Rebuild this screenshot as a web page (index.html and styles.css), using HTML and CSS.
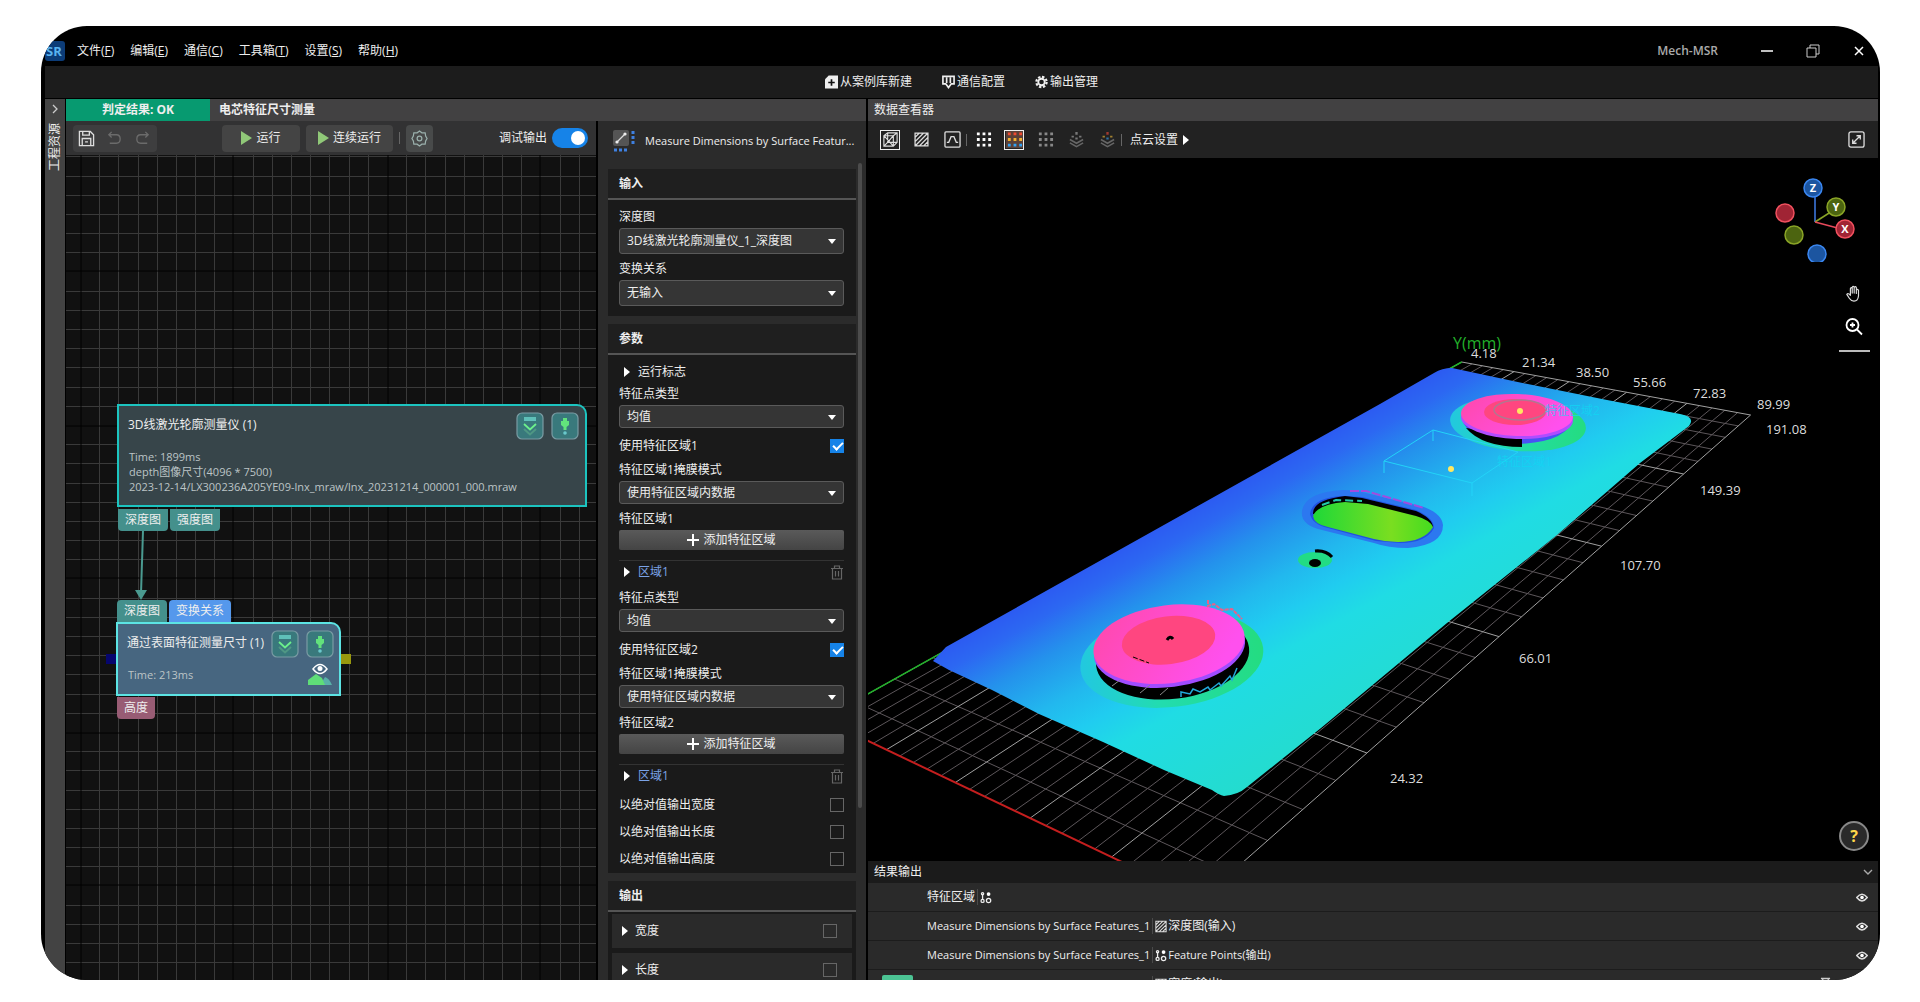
FILE: index.html
```
<!DOCTYPE html>
<html lang="zh-CN">
<head>
    <meta charset="UTF-8">
    <meta name="viewport" content="width=device-width, initial-scale=1.0">
    <title>Mech-MSR</title>
    <link rel="stylesheet" href="styles.css">
</head>
<body>
    <!-- shared icons -->
    <svg class="sprite" aria-hidden="true">
        <symbol id="i-eye" viewBox="0 0 16 12">
            <path d="M1 6Q8-3 15 6Q8 15 1 6Z" fill="none" stroke="#ddd" stroke-width="2"/>
            <circle cx="8" cy="6" r="2.4" fill="#fff"/>
        </symbol>
        <symbol id="i-trash" viewBox="0 0 14 15">
            <path d="M1 3.500H13M4.500 3V1H9.500V3M2.500 3.500V14H11.500V3.500M5.500 6V11.500M8.500 6V11.500" fill="none" stroke="#666" stroke-width="1.200"/>
        </symbol>
        <symbol id="i-points" viewBox="0 0 14 14">
            <g fill="none" stroke="#eee" stroke-width="1.500">
                <circle cx="3" cy="2.500" r="1.300"/>
                <circle cx="3" cy="11" r="1.800"/>
                <circle cx="10" cy="10.500" r="2.500"/>
                <path d="M3 4V9"/>
            </g>
            <circle cx="10" cy="3" r="2.200" fill="#fff"/>
        </symbol>
        <symbol id="i-hatch" viewBox="0 0 14 14">
            <path d="M1 1H13V13H1ZM1 5L5 1M1 9L9 1M1 13L13 1M5 13L13 5M9 13L13 9" fill="none" stroke="#ddd" stroke-width="1.200"/>
        </symbol>
        <symbol id="i-expand" viewBox="0 0 28 28">
            <rect x="1" y="1" width="26" height="26" rx="5" fill="#39797c" stroke="#7a9ca4" stroke-width="1.200"/>
            <rect x="8" y="5" width="12" height="4" fill="#5fc0b8"/>
            <path d="M8 17L14 22.500L20 17" fill="none" stroke="#4f9784" stroke-width="2"/>
            <path d="M8 12L14 17.500L20 12" fill="none" stroke="#6cf08c" stroke-width="1.800"/>
        </symbol>
        <symbol id="i-run" viewBox="0 0 28 28">
            <rect x="1" y="1" width="26" height="26" rx="5" fill="#39797c" stroke="#7a9ca4" stroke-width="1.200"/>
            <path d="M12 6H16V9H18V13L15.500 15V18H12.500V15L10 13V9H12Z" fill="#62e37c"/>
            <circle cx="14" cy="21" r="1.800" fill="#69c8cc"/>
        </symbol>
        <symbol id="i-layers" viewBox="0 0 16 18">
            <path d="M1 9L8 13L15 9M1 12.500L8 16.500L15 12.500" fill="none" stroke="#666" stroke-width="1.600"/>
        </symbol>
    </svg>

    <div class="window">
        <header class="titlebar">
            <svg class="logo" viewBox="0 0 20 20"><rect width="20" height="20" rx="3" fill="#0c3c78"/><text x="1" y="15" class="logo-text">SR</text></svg>
            <nav class="menu">
                <a href="#">文件(<u>F</u>)</a>
                <a href="#">编辑(<u>E</u>)</a>
                <a href="#">通信(<u>C</u>)</a>
                <a href="#">工具箱(<u>T</u>)</a>
                <a href="#">设置(<u>S</u>)</a>
                <a href="#">帮助(<u>H</u>)</a>
            </nav>
            <span class="app-name">Mech-MSR</span>
            <div class="window-buttons">
                <button aria-label="最小化"><svg viewBox="0 0 14 14"><path d="M1 7H13" stroke="#fff" stroke-width="1.500"/></svg></button>
                <button aria-label="还原"><svg viewBox="0 0 14 14" fill="none" stroke="#ccc"><path d="M1 4H10V13H1ZM4 4V1H13V10H10"/></svg></button>
                <button aria-label="关闭"><svg viewBox="0 0 14 14"><path d="M3 3L11 11M11 3L3 11" stroke="#fff" stroke-width="1.500"/></svg></button>
            </div>
        </header>

        <div class="main-toolbar">
            <button><svg viewBox="0 0 14 14"><path d="M4 0H14V14H0V4Z" fill="#eee"/><path d="M7 4V11M3.500 7.500H10.500" stroke="#111" stroke-width="1.800"/></svg>从案例库新建</button>
            <button><svg viewBox="0 0 14 14"><path d="M1 1H13V9H10L7 13L4 9H1Z" fill="none" stroke="#eee" stroke-width="1.800"/><path d="M5 2V8M9 2V8" stroke="#eee" stroke-width="1.800"/></svg>通信配置</button>
            <button><svg viewBox="0 0 14 14"><circle cx="7" cy="7" r="5.500" fill="none" stroke="#eee" stroke-width="2.400" stroke-dasharray="2.600 1.700"/><circle cx="7" cy="7" r="3.500" fill="none" stroke="#eee" stroke-width="2"/></svg>输出管理</button>
        </div>

        <main class="workspace">
            <aside class="side">
                <svg viewBox="0 0 10 12"><path d="M3 2L7 6L3 10" fill="none" stroke="#ccc" stroke-width="1.300"/></svg>
                <span>工程资源</span>
            </aside>

            <section class="project">
                <div class="strip">
                    <span class="verdict">判定结果: OK</span>
                    <h1>电芯特征尺寸测量</h1>
                </div>
                <div class="project-body">
                    <div class="graph">
                        <div class="graph-toolbar">
                            <div class="group">
                                <button aria-label="保存"><svg viewBox="0 0 18 18" fill="none" stroke="#ddd" stroke-width="1.400"><path d="M1.500 1.500H13L16.500 5V16.500H1.500ZM5 1.500V5.500H12V1.500M4.500 16.500V9H13.500V16.500M7.500 12.500H10.500"/></svg></button>
                                <button aria-label="撤销"><svg viewBox="0 0 18 18" fill="none" stroke="#6b6b6b" stroke-width="1.400"><path d="M6 2L3 5L6 8M3 5H11Q15 5 15 9.500T11 14H4"/></svg></button>
                                <button aria-label="重做"><svg viewBox="0 0 18 18" fill="none" stroke="#6b6b6b" stroke-width="1.400"><path d="M12 2L15 5L12 8M15 5H7Q3 5 3 9.500T7 14H14"/></svg></button>
                            </div>
                            <button class="run"><i class="play"></i>运行</button>
                            <button class="run run-loop"><i class="play"></i>连续运行</button>
                            <i class="sep"></i>
                            <button class="gear" aria-label="设置"><svg viewBox="0 0 18 18" fill="none" stroke="#9ab0ac" stroke-width="1.300"><path d="M9 1L11.500 3H15L15.500 6.500L17 9L15.500 11.500L15 15H11.500L9 17L6.500 15H3L2.500 11.500L1 9L2.500 6.500L3 3H6.500Z"/><circle cx="9" cy="9" r="2.500"/></svg></button>
                            <label class="debug">调试输出<input type="checkbox" class="switch" checked></label>
                        </div>

                        <div class="canvas">
                            <svg class="grid">
                                <defs>
                                    <pattern id="grid" width="307" height="307" x="14" y="-37" patternUnits="userSpaceOnUse">
                                        <path id="gridMinor" stroke="#3a3a3a"/>
                                        <path stroke="#000" d="M0 1H307M0 153H307M1 0V307M153 0V307"/>
                                    </pattern>
                                </defs>
                                <rect width="100%" height="100%" fill="url(#grid)"/>
                                <path d="M77 376L75 438" stroke="#4a9a90" stroke-width="2"/>
                                <path d="M69 435H81L75 445Z" fill="#4a9a90"/>
                            </svg>

                            <div class="node node-camera">
                                <div class="node-head">
                                    <h2>3D线激光轮廓测量仪 (1)</h2>
                                    <svg><use href="#i-expand"/></svg>
                                    <svg><use href="#i-run"/></svg>
                                </div>
                                <p>Time: 1899ms</p>
                                <p>depth图像尺寸(4096 * 7500)</p>
                                <p>2023-12-14/LX300236A205YE09-lnx_mraw/lnx_20231214_000001_000.mraw</p>
                            </div>
                            <div class="ports ports-camera-out">
                                <span>深度图</span>
                                <span>强度图</span>
                            </div>

                            <div class="ports ports-measure-in">
                                <span>深度图</span>
                                <span class="port-blue">变换关系</span>
                            </div>
                            <div class="node node-measure">
                                <div class="node-head">
                                    <h2>通过表面特征测量尺寸 (1)</h2>
                                    <svg><use href="#i-expand"/></svg>
                                    <svg><use href="#i-run"/></svg>
                                </div>
                                <div class="node-foot">
                                    <p>Time: 213ms</p>
                                    <svg viewBox="0 0 26 22">
                                        <path d="M6 6Q13-3 20 6Q13 15 6 6Z" fill="none" stroke="#fff" stroke-width="1.500"/>
                                        <circle cx="13" cy="5.500" r="2.500" fill="#fff"/>
                                        <path d="M13 22L18 14Q22 15 25 22Z" fill="#58b0a8"/>
                                        <path d="M1 22V17L9 11L15 15L18 22Z" fill="#5fdd78"/>
                                    </svg>
                                </div>
                            </div>
                            <i class="pin pin-in"></i>
                            <i class="pin pin-out"></i>
                            <div class="ports ports-measure-out">
                                <span class="port-rose">高度</span>
                            </div>
                        </div>
                    </div>

                    <div class="params">
                        <div class="params-title">
                            <svg viewBox="0 0 22 22">
                                <rect width="16" height="16" rx="2" fill="#555"/>
                                <path d="M4 12L12 4" stroke="#ddd" stroke-width="1.300"/>
                                <circle cx="4" cy="12" r="1.600" fill="#eee"/><circle cx="12" cy="4" r="1.600" fill="#eee"/>
                                <path d="M1 20H15M20 1V15" stroke="#3f80e0" stroke-width="3" stroke-dasharray="3 2"/>
                            </svg>
                            <h2>Measure Dimensions by Surface Featur...</h2>
                        </div>
                        <div class="params-scroll">
                            <form class="sections">
                                <section>
                                    <h3>输入</h3>
                                    <div class="fields inputs">
                                        <label for="depth">深度图</label>
                                        <div class="select"><select id="depth"><option>3D线激光轮廓测量仪_1_深度图</option></select></div>
                                        <label for="transform">变换关系</label>
                                        <div class="select"><select id="transform"><option>无输入</option></select></div>
                                    </div>
                                </section>

                                <section>
                                    <h3>参数</h3>
                                    <div class="fields">
                                        <div class="fold"><i class="tri"></i>运行标志</div>
                                        <label for="type1">特征点类型</label>
                                        <div class="select"><select id="type1"><option>均值</option></select></div>
                                        <label class="check">使用特征区域1<input type="checkbox" checked></label>
                                        <label for="mask1">特征区域1掩膜模式</label>
                                        <div class="select"><select id="mask1"><option>使用特征区域内数据</option></select></div>
                                        <div class="caption">特征区域1</div>
                                        <button type="button" class="add"><i class="plus"></i>添加特征区域</button>
                                        <div class="fold region"><i class="tri"></i><span>区域1</span><svg><use href="#i-trash"/></svg></div>
                                        <label for="type2">特征点类型</label>
                                        <div class="select"><select id="type2"><option>均值</option></select></div>
                                        <label class="check">使用特征区域2<input type="checkbox" checked></label>
                                        <label for="mask2">特征区域1掩膜模式</label>
                                        <div class="select"><select id="mask2"><option>使用特征区域内数据</option></select></div>
                                        <div class="caption">特征区域2</div>
                                        <button type="button" class="add"><i class="plus"></i>添加特征区域</button>
                                        <div class="fold region"><i class="tri"></i><span>区域1</span><svg><use href="#i-trash"/></svg></div>
                                        <label class="check">以绝对值输出宽度<input type="checkbox"></label>
                                        <label class="check">以绝对值输出长度<input type="checkbox"></label>
                                        <label class="check">以绝对值输出高度<input type="checkbox"></label>
                                    </div>
                                </section>

                                <section>
                                    <h3>输出</h3>
                                    <div class="outputs">
                                        <label><i class="tri"></i>宽度<input type="checkbox"></label>
                                        <label><i class="tri"></i>长度<input type="checkbox"></label>
                                    </div>
                                </section>
                            </form>
                            <div class="track"><i></i></div>
                        </div>
                    </div>
                </div>
            </section>

            <section class="viewer">
                <div class="strip">数据查看器</div>
                <div class="viewer-toolbar">
                    <button class="on" aria-label="3D"><svg viewBox="0 0 18 18" fill="none" stroke="#ddd" stroke-width="1.200"><path d="M2 5L6 2H16V12L12 16H2ZM2 5H12V16M12 5L16 2M6 2V12H16M6 12L2 16M2 5L12 16M12 5L6 12"/></svg></button>
                    <button aria-label="深度"><svg class="small"><use href="#i-hatch"/></svg></button>
                    <button aria-label="轮廓"><svg viewBox="0 0 18 18" fill="none" stroke="#ddd" stroke-width="1.400"><rect x="1" y="1" width="16" height="16" rx="1"/><path d="M3 12H5L7.500 6H10.500L13 12H15"/></svg></button>
                    <i class="sep"></i>
                    <button aria-label="点云"><svg viewBox="0 0 18 18"><path d="M2 3H17M2 9H17M2 15H17" class="dots" stroke="#fff"/></svg></button>
                    <button class="on" aria-label="高度渲染"><svg viewBox="0 0 18 18"><rect width="18" height="18" fill="#5a4038"/><path d="M2 3H17" class="dots" stroke="#f04a30"/><path d="M2 9H17" class="dots" stroke="#f0b030"/><path d="M2 15H17" class="dots" stroke="#30a0f0"/></svg></button>
                    <button aria-label="灰度点云"><svg viewBox="0 0 18 18"><path d="M2 3H17M2 9H17M2 15H17" class="dots" stroke="#888"/></svg></button>
                    <button aria-label="图层"><svg viewBox="0 0 16 18"><use href="#i-layers"/><path d="M8 1V4M4 5V7M12 5V7M8 7V9" stroke="#777" stroke-width="2.500"/></svg></button>
                    <button aria-label="彩色图层"><svg viewBox="0 0 16 18"><use href="#i-layers"/><path d="M8 1V4" stroke="#a03a30" stroke-width="2.500"/><path d="M4 5V7M12 5V7" stroke="#a08030" stroke-width="2.500"/><path d="M8 7V9" stroke="#3070a0" stroke-width="2.500"/></svg></button>
                    <i class="sep"></i>
                    <button class="cloud">点云设置<i class="tri"></i></button>
                    <button class="full" aria-label="全屏"><svg viewBox="0 0 18 18" fill="none" stroke="#ddd" stroke-width="1.400"><rect x="1" y="1" width="16" height="16" rx="2"/><path d="M5 13L13 5M9 5H13V9M5 9V13H9"/></svg></button>
                </div>

                <div class="scene">
                    <svg class="cloud-view" viewBox="868 158 1010 703" preserveAspectRatio="xMidYMid slice">
                        <defs>
                            <linearGradient id="plate" gradientUnits="userSpaceOnUse" x1="1190" y1="512" x2="1327" y2="756">
                                <stop offset="0" stop-color="#2c5cf2"/>
                                <stop offset=".07" stop-color="#2c68f2"/>
                                <stop offset=".2" stop-color="#2492ec"/>
                                <stop offset=".36" stop-color="#22b8ee"/>
                                <stop offset=".48" stop-color="#20ccf0"/>
                                <stop offset=".6" stop-color="#20dce4"/>
                                <stop offset="1" stop-color="#24dccc"/>
                            </linearGradient>
                            <linearGradient id="disc" x1="0" y1="0" x2="1" y2=".4">
                                <stop offset="0" stop-color="#ff48a8"/>
                                <stop offset="1" stop-color="#ff50ee"/>
                            </linearGradient>
                            <linearGradient id="ring" x1="0" y1="0" x2="1" y2="0">
                                <stop offset="0" stop-color="#22c8e0"/>
                                <stop offset=".4" stop-color="#22dcb0"/>
                                <stop offset="1" stop-color="#24dc80"/>
                            </linearGradient>
                            <linearGradient id="slot" x1="0" y1="0" x2="1" y2="0">
                                <stop offset="0" stop-color="#1ed838"/>
                                <stop offset=".65" stop-color="#7ade20"/>
                                <stop offset="1" stop-color="#44dc20"/>
                            </linearGradient>
                        </defs>

                        <g fill="none">
                            <path id="floorMinor" stroke="#5c565a"/>
                            <path id="floorMajor" stroke="#a0a0a0"/>
                            <path id="axisX" stroke="#c41e1e" stroke-width="2"/>
                            <path id="axisY" stroke="#22b02a" stroke-width="1.500"/>
                        </g>

                        <!-- battery cover plate -->
                        <path fill="url(#plate)" d="M933 661L946 647L1380 404L1434 373Q1442 368 1452 368L1513 381L1607 400L1680 414Q1696 417 1689 426L1640 463L1557 535L1447 623L1321 728L1247 787Q1238 795 1224 796Q1219 795 1212 790L1164 770L1103 742L1039 714L992 690L949 670Z"/>

                        <!-- lower terminal -->
                        <g transform="rotate(-7 1171 652)">
                            <ellipse cx="1171" cy="659" rx="92" ry="48" fill="url(#ring)"/>
                            <ellipse cx="1172" cy="657" rx="77" ry="42" fill="#000"/>
                            <ellipse cx="1170" cy="648" rx="76" ry="39" fill="#a04cff"/>
                            <ellipse cx="1170" cy="644" rx="76" ry="39" fill="url(#disc)"/>
                            <ellipse cx="1170" cy="640" rx="47" ry="24" fill="#ff4680"/>
                        </g>
                        <path d="M1167 640Q1170 635 1173 639" fill="none" stroke="#000" stroke-width="3"/>
                        <path d="M1133 657L1149 663" stroke="#000" stroke-dasharray="5 2"/>
                        <path d="M1208 600V606L1214 604L1222 610L1232 609L1242 619" fill="none" stroke="#e8608c" stroke-width="2" stroke-dasharray="4 1"/>
                        <path d="M1181 697V692L1190 694L1193 689L1200 692L1208 687L1210 690L1219 683L1221 686L1230 676L1232 680L1237 668" fill="none" stroke="#22a8d8" stroke-width="1.500"/>
                        <path d="M1112 686L1120 680M1140 693L1150 685M1160 695L1168 688" stroke="#888"/>

                        <!-- upper terminal -->
                        <ellipse cx="1518" cy="424" rx="68" ry="27" fill="url(#ring)" transform="rotate(4 1518 424)"/>
                        <path d="M1462 418Q1465 440 1518 444Q1568 442 1573 418Z" fill="#4a50f4"/>
                        <path d="M1466 428L1522 436V447Q1482 447 1466 428Z" fill="#000"/>
                        <ellipse cx="1517" cy="419" rx="56" ry="20" fill="#b04cff" transform="rotate(2 1517 419)"/>
                        <ellipse cx="1517" cy="415" rx="56" ry="21" fill="url(#disc)" transform="rotate(2 1517 415)"/>
                        <ellipse cx="1515" cy="412" rx="31" ry="13" fill="#ff4680"/>
                        <ellipse cx="1520" cy="410" rx="26" ry="10" fill="none" stroke="#b07890" stroke-width="1.500"/>

                        <!-- vent slot -->
                        <path d="M1302 511Q1305 492 1343 490Q1356 490 1366 493L1424 507Q1442 514 1443 525Q1443 545 1408 548Q1388 548 1374 543L1322 530Q1300 525 1302 511Z" fill="#2c78f0"/>
                        <path d="M1310 514Q1312 498 1342 496L1362 497L1416 510Q1434 518 1434 528Q1426 543 1400 543L1376 541L1328 528Q1312 524 1310 514Z" fill="#2250e0"/>
                        <path d="M1313 514Q1312 500 1345 496L1362 498L1416 511Q1432 518 1433 527L1400 520L1350 510Z" fill="#000"/>
                        <path d="M1313 516Q1318 504 1345 502L1368 504L1416 516Q1430 520 1433 527Q1424 542 1398 542Q1386 542 1374 539L1328 527Q1314 524 1313 516Z" fill="url(#slot)"/>
                        <path d="M1350 491H1366L1390 498L1424 508" fill="none" stroke="#a04ce0" stroke-width="2" stroke-dasharray="9 2"/>
                        <path d="M1322 505L1336 500L1362 501" fill="none" stroke="#22c8a8" stroke-width="2" stroke-dasharray="8 4"/>

                        <!-- filling hole -->
                        <ellipse cx="1315" cy="560" rx="17" ry="8" fill="#22dc84"/>
                        <ellipse cx="1315" cy="563" rx="6" ry="4" fill="#000"/>
                        <path d="M1315 551Q1326 550 1332 557" fill="none" stroke="#000" stroke-width="3"/>

                        <!-- measuring box -->
                        <path d="M1384 473V461L1433 430L1518 452L1472 483L1384 461M1433 430V441M1472 483V496" fill="none" stroke="#22d4f8"/>
                        <g class="tag">
                            <text x="1545" y="415">特征区域2</text>
                            <text x="1497" y="466">特征区域1</text>
                        </g>
                        <circle cx="1520" cy="411" r="3" fill="#ffe860"/>
                        <circle cx="1451" cy="469" r="3" fill="#ffe860"/>

                        <text x="1453" y="349" class="axis-name">Y(mm)</text>
                        <g class="ticks">
                            <text x="1471" y="358">4.18</text>
                            <text x="1522" y="367">21.34</text>
                            <text x="1576" y="377">38.50</text>
                            <text x="1633" y="387">55.66</text>
                            <text x="1693" y="398">72.83</text>
                            <text x="1757" y="409">89.99</text>
                            <text x="1766" y="434">191.08</text>
                            <text x="1700" y="495">149.39</text>
                            <text x="1620" y="570">107.70</text>
                            <text x="1519" y="663">66.01</text>
                            <text x="1390" y="783">24.32</text>
                        </g>
                    </svg>

                    <div class="tools">
                        <svg class="gizmo" viewBox="0 0 84 92">
                            <g fill="none" stroke-width="1.500">
                                <path d="M42 52V18" stroke="#3f7de8"/>
                                <path d="M42 52L64 38" stroke="#8aa426"/>
                                <path d="M42 52L72 60" stroke="#e84a5c"/>
                            </g>
                            <g stroke-width="1.500">
                                <circle cx="40" cy="18" r="9" fill="#1c55a0" stroke="#3a86f0"/>
                                <circle cx="63" cy="37" r="9" fill="#4c6410" stroke="#8aa426"/>
                                <circle cx="72" cy="59" r="9" fill="#a02434" stroke="#f0505e"/>
                                <circle cx="12" cy="43" r="9" fill="#a02434" stroke="#f0505e"/>
                                <circle cx="21" cy="65" r="9" fill="#4c6410" stroke="#8aa426"/>
                                <circle cx="44" cy="84" r="9" fill="#1c55a0" stroke="#3a86f0"/>
                            </g>
                            <text x="40" y="22">Z</text>
                            <text x="63" y="41">Y</text>
                            <text x="72" y="63">X</text>
                        </svg>
                        <button aria-label="平移"><svg viewBox="0 0 20 20" fill="none" stroke="#ddd" stroke-width="1.300" stroke-linejoin="round"><path d="M6 12V4.500Q7 2.500 8 4.500V9.500V3Q9 1 10.200 3V9.500V3.300Q11.500 1.500 12.600 3.500V10V6Q14 4.500 15 6.500V12.500Q14.500 18.500 10 18.500Q7 18.500 5 15.500L2 11Q3.500 9 6 12Z"/></svg></button>
                        <button aria-label="放大"><svg viewBox="0 0 18 18" fill="none" stroke="#fff" stroke-width="1.800"><circle cx="7.500" cy="7.500" r="6"/><path d="M12 12L17 17M7.500 5V10M5 7.500H10"/></svg></button>
                        <hr>
                    </div>
                    <button class="help">?</button>
                </div>

                <div class="results">
                    <div class="results-title">结果输出<svg viewBox="0 0 12 12"><path d="M2 4L6 8L10 4" fill="none" stroke="#aaa" stroke-width="1.400"/></svg></div>
                    <ul>
                        <li><span class="cjk">特征区域</span><i class="sep"></i><svg class="kind"><use href="#i-points"/></svg><svg class="eye"><use href="#i-eye"/></svg></li>
                        <li><span>Measure Dimensions by Surface Features_1</span><i class="sep"></i><svg class="kind"><use href="#i-hatch"/></svg><span class="cjk">深度图(输入)</span><svg class="eye"><use href="#i-eye"/></svg></li>
                        <li><span>Measure Dimensions by Surface Features_1</span><i class="sep"></i><svg class="kind"><use href="#i-points"/></svg><span>Feature Points(输出)</span><svg class="eye"><use href="#i-eye"/></svg></li>
                        <li><b class="ok">OK</b><span>Measure Dimensions by Surface Features_1</span><i class="sep"></i><svg class="kind"><use href="#i-hatch"/></svg><span class="cjk">宽度(输出)</span><span class="value">3.181</span><svg class="pinned" viewBox="0 0 12 14"><path d="M1 1H11M3 1V7L1 9H11L9 7V1M6 9V14" fill="none" stroke="#ccc" stroke-width="1.500"/></svg></li>
                    </ul>
                </div>
            </section>
        </main>
    </div>

    <script>
        // workflow canvas: 16 cells per pattern tile, every 8th line is drawn black
        let cells = '';
        for (let i = 1; i < 16; i++) {
            if (i === 8) continue;
            const p = Math.round(i * 307 / 16) + 0.5;
            cells += `M${p} 0V307M0 ${p}H307`;
        }
        document.getElementById('gridMinor').setAttribute('d', cells);

        // floor grid of the 3D view, u goes across the plate and v along it
        function project(u, v) {
            const w = 1 - 0.0227 * u - 0.08096 * v;
            const x = (1461.7 + 18.04 * u - 195.7 * v) / w;
            const y = (362 + 1.18 * u + 13.95 * v) / w;
            return x.toFixed(1) + ' ' + y.toFixed(1);
        }
        function line(u1, v1, u2, v2) {
            return 'M' + project(u1, v1) + 'L' + project(u2, v2);
        }
        const END = 4.95;
        let minor = '';
        let major = '';
        for (let i = 0; i <= 25; i++) {
            const n = i / 5;
            if (i % 5) {
                minor += line(n, 0, n, END) + line(0, n, 5, n);
            } else {
                major += line(n, 0, n, END);
                if (n < 5) major += line(0, n, 5, n);
            }
        }
        document.getElementById('floorMinor').setAttribute('d', minor);
        document.getElementById('floorMajor').setAttribute('d', major);
        document.getElementById('axisX').setAttribute('d', line(0, END, 5, END));
        document.getElementById('axisY').setAttribute('d', line(0, 0, 0, END));
    </script>
</body>
</html>
```
FILE: styles.css
```
*{
    margin: 0;
    padding: 0;
    box-sizing: border-box;
}
body{
    background-color: white;
    color: #eee;
    height: 100vh;
    padding: 26px 40px 22px 41px;
    font-family: "Open Sans", "Noto Sans CJK SC", sans-serif;
    font-size: 12px;
    line-height: 16px;
}
button, select, input {
    font: inherit;
    color: inherit;
    background: none;
    border: none;
}
h1, h2, h3 {
    font-size: 12px;
}
i {
    display: block;
    flex: none;
}
svg {
    display: block;
    flex: none;
}
.sprite {
    position: absolute;
    width: 0;
    height: 0;
}
.window {
    height: 100%;
    display: flex;
    flex-direction: column;
    background-color: black;
    border-radius: 46px;
    overflow: hidden;
    padding: 0 2px 0 4px;
    white-space: nowrap;
}

/* title bar */
.titlebar {
    height: 40px;
    flex: none;
    display: flex;
    align-items: center;
    padding: 9px 12px 0 0;
}
.logo {
    width: 20px;
    height: 20px;
}
.logo-text {
    font-size: 13px;
    font-weight: bold;
    fill: #5ab4f0;
}
.menu {
    display: flex;
    gap: 16px;
    margin-left: 12px;
}
.menu a {
    color: #eee;
    text-decoration: none;
}
.app-name {
    margin-left: auto;
    color: #aaa;
    font-weight: 600;
}
.window-buttons {
    display: flex;
    gap: 32px;
    margin-left: 42px;
}
.window-buttons svg {
    width: 14px;
    height: 14px;
}
.main-toolbar {
    height: 32px;
    flex: none;
    display: flex;
    justify-content: center;
    align-items: center;
    gap: 30px;
    background-color: #1c1c1c;
}
.main-toolbar button {
    display: flex;
    align-items: center;
    gap: 2px;
}
.main-toolbar svg {
    width: 13px;
    height: 14px;
}

/* columns */
.workspace {
    flex: 1;
    min-height: 0;
    margin-top: 1px;
    display: flex;
}
.side {
    width: 20px;
    flex: none;
    margin-right: 1px;
    padding-top: 4px;
    background-color: #434343;
    display: flex;
    flex-direction: column;
    align-items: center;
    gap: 8px;
}
.side svg {
    width: 10px;
    height: 12px;
}
.side span {
    writing-mode: vertical-rl;
    text-orientation: sideways;
    transform: rotate(180deg);
}
.project {
    flex: 800 1 0;
    min-width: 0;
    display: flex;
    flex-direction: column;
    margin-right: 2px;
}
.strip {
    height: 22px;
    flex: none;
    background-color: #424142;
    display: flex;
    align-items: center;
}
.verdict {
    width: 144px;
    line-height: 22px;
    background-color: #079a70;
    text-align: center;
    font-weight: bold;
}
.strip h1 {
    margin-left: 9px;
}
.project-body {
    flex: 1;
    min-height: 0;
    display: flex;
}
.graph {
    flex: 1;
    min-width: 0;
    margin-right: 2px;
    display: flex;
    flex-direction: column;
}
.graph-toolbar {
    height: 34px;
    flex: none;
    background-color: #323233;
    display: flex;
    align-items: center;
    padding: 0 8px 0 7px;
}
.group {
    display: flex;
    background-color: #3e3e3f;
    border-radius: 4px;
    margin-right: 65px;
}
.group button {
    width: 28px;
    height: 27px;
    padding: 5px;
}
.run {
    width: 78px;
    height: 27px;
    background-color: #444444;
    border-radius: 4px;
    display: flex;
    align-items: center;
    justify-content: center;
    gap: 4px;
}
.run-loop {
    width: 87px;
    margin-left: 6px;
}
.play {
    border-left: 11px solid #90c878;
    border-top: 7px solid transparent;
    border-bottom: 7px solid transparent;
}
.sep {
    width: 1px;
    height: 12px;
    background-color: #666;
}
.run-loop + .sep {
    margin: 0 6px;
}
.gear {
    width: 27px;
    height: 27px;
    padding: 5px;
    background-color: #484a4a;
    border-radius: 4px;
}
.group svg, .gear svg {
    width: 17px;
    height: 17px;
}
.debug {
    margin-left: auto;
    display: flex;
    align-items: center;
    gap: 5px;
}
.switch {
    appearance: none;
    width: 36px;
    height: 20px;
    padding: 3px;
    border-radius: 10px;
    background-color: #1683e8;
    display: flex;
    justify-content: flex-end;
}
.switch::before {
    content: "";
    width: 14px;
    height: 14px;
    border-radius: 50%;
    background-color: white;
}

/* workflow canvas */
.canvas {
    flex: 1;
    min-height: 0;
    position: relative;
    overflow: hidden;
    background-color: #111;
}
.grid {
    width: 100%;
    height: 100%;
}
.node {
    position: absolute;
    border: 2px solid #1cc4c0;
    border-radius: 0 10px 0 0;
    padding: 6px;
    font-size: 11px;
    line-height: 15px;
    color: #bcc4c6;
}
.node-head {
    display: flex;
    align-items: center;
    gap: 7px;
}
.node-head h2 {
    flex: 1;
    padding: 0 0 3px 3px;
    font-weight: normal;
    color: #eee;
}
.node-head svg {
    width: 28px;
    height: 28px;
}
.node p {
    padding-left: 4px;
}
.node-camera {
    left: 51px;
    top: 249px;
    width: 470px;
    height: 103px;
    background-color: #37454a;
}
.node-camera .node-head {
    margin-bottom: 9px;
}
.node-measure {
    left: 50px;
    top: 467px;
    width: 225px;
    height: 74px;
    border-color: #5ce4e4;
    background-color: #476680;
}
.node-foot {
    display: flex;
    justify-content: space-between;
    align-items: center;
    margin-top: 5px;
}
.node-foot svg {
    width: 26px;
    height: 22px;
}
.ports {
    position: absolute;
    display: flex;
    gap: 2px;
}
.ports span {
    padding: 0 7px;
    line-height: 22px;
    background-color: #44908c;
    border-radius: 0 0 4px 4px;
}
.ports .port-blue {
    background-color: #5598ec;
}
.ports .port-rose {
    background-color: #985c74;
}
.ports-camera-out {
    left: 52px;
    top: 354px;
}
.ports-measure-in {
    left: 51px;
    top: 445px;
}
.ports-measure-in span {
    border-radius: 4px 4px 0 0;
}
.ports-measure-out {
    left: 51px;
    top: 542px;
}
.pin {
    position: absolute;
    top: 499px;
    width: 10px;
    height: 10px;
}
.pin-in {
    left: 40px;
    background-color: #06066e;
}
.pin-out {
    left: 275px;
    background-color: #98980e;
}

/* parameters */
.params {
    width: 268px;
    flex: none;
    background-color: #2b2b2b;
    display: flex;
    flex-direction: column;
}
.params-title {
    height: 40px;
    flex: none;
    display: flex;
    align-items: center;
    gap: 10px;
    padding-left: 15px;
}
.params-title svg {
    width: 22px;
    height: 22px;
}
.params-title h2 {
    font-size: 11px;
    font-weight: normal;
}
.params-scroll {
    flex: 1;
    min-height: 0;
    overflow: hidden;
    display: flex;
    gap: 2px;
    padding-left: 10px;
}
.sections {
    width: 248px;
    padding-top: 8px;
    display: flex;
    flex-direction: column;
    gap: 8px;
}
.track {
    width: 4px;
    padding-top: 2px;
}
.track i {
    height: 79%;
    border-radius: 2px;
    background-color: #4c4c4c;
}
.sections section {
    background-color: #1a1a1a;
}
.sections h3 {
    padding-left: 11px;
    line-height: 29px;
    background-color: #1f1f1f;
    border-bottom: 2px solid #555;
}
.fields {
    padding: 6px 12px 1px 11px;
    display: flex;
    flex-direction: column;
}
.inputs {
    padding-bottom: 6px;
}
.fields > label, .caption {
    line-height: 22px;
}
.select {
    position: relative;
    margin-bottom: 4px;
}
.select::after {
    content: "";
    position: absolute;
    right: 8px;
    top: 50%;
    margin-top: -2px;
    border-top: 5px solid #fff;
    border-left: 4px solid transparent;
    border-right: 4px solid transparent;
}
select {
    display: block;
    appearance: none;
    width: 100%;
    height: 23px;
    padding: 0 7px;
    background-color: #353535;
    border: 1px solid #5a5a5a;
    border-radius: 3px;
}
.inputs select {
    height: 26px;
}
.fields .check {
    display: flex;
    align-items: center;
    justify-content: space-between;
    line-height: 27px;
}
.check input, .outputs input {
    appearance: none;
    width: 14px;
    height: 14px;
    border: 1px solid #666;
}
.check input:checked {
    background-color: #1683e8;
    border-color: #1683e8;
}
.check input:checked::before {
    content: "";
    display: block;
    width: 4px;
    height: 8px;
    margin-left: 4px;
    border: solid #fff;
    border-width: 0 2px 2px 0;
    transform: rotate(45deg);
}
.fold {
    display: flex;
    align-items: center;
    height: 22px;
    padding-left: 5px;
    gap: 8px;
}
.tri {
    border-left: 6px solid #fff;
    border-top: 5px solid transparent;
    border-bottom: 5px solid transparent;
}
.region {
    height: 23px;
    margin-bottom: 4px;
    padding-left: 5px;
    border-top: 1px solid #333;
}
.region span {
    flex: 1;
    color: #7aa2e6;
}
.region svg {
    width: 14px;
    height: 15px;
}
.add {
    height: 20px;
    margin-bottom: 10px;
    border-radius: 2px;
    background-image: linear-gradient(#5a5a5a, #444);
    display: flex;
    align-items: center;
    justify-content: center;
    gap: 4px;
}
.plus {
    width: 12px;
    height: 12px;
    background: linear-gradient(#fff, #fff) center / 12px 2px no-repeat,
        linear-gradient(#fff, #fff) center / 2px 12px no-repeat;
}
.outputs {
    padding: 2px 4px;
    display: flex;
    flex-direction: column;
    gap: 5px;
}
.outputs label {
    display: flex;
    align-items: center;
    gap: 7px;
    height: 34px;
    padding: 0 15px 0 10px;
    background-color: #2a2a2a;
}
.outputs input {
    margin-left: auto;
}

/* data viewer */
.viewer {
    flex: 1010 1 0;
    min-width: 0;
    display: flex;
    flex-direction: column;
}
.viewer .strip {
    padding-left: 6px;
}
.viewer-toolbar {
    height: 37px;
    flex: none;
    background-color: #222;
    display: flex;
    align-items: center;
    gap: 6px;
    padding: 0 12px;
}
.viewer-toolbar button {
    min-width: 20px;
    height: 20px;
    display: flex;
    align-items: center;
    justify-content: center;
    margin-right: 5px;
}
.viewer-toolbar button.on {
    border: 1px solid #eee;
}
.viewer-toolbar svg {
    width: 17px;
    height: 17px;
}
.viewer-toolbar .small {
    width: 15px;
    height: 15px;
}
.viewer-toolbar .sep {
    margin: 0 0 0 -7px;
}
.dots {
    stroke-width: 3;
    stroke-dasharray: 3 3;
}
.viewer-toolbar .cloud {
    gap: 5px;
    margin-left: 2px;
}
.viewer-toolbar .full {
    margin: 0 0 0 auto;
}
.scene {
    flex: 1;
    min-height: 0;
    position: relative;
    overflow: hidden;
    background-color: black;
}
.cloud-view {
    width: 100%;
    height: 100%;
}
.axis-name {
    font-size: 16px;
    fill: #22b02a;
}
.ticks {
    font-size: 13px;
    fill: #ddd;
}
.tag {
    font-size: 12px;
    fill: #10d8f4;
    opacity: 0.7;
}
.tools {
    position: absolute;
    right: 8px;
    top: 12px;
    display: flex;
    flex-direction: column;
    align-items: flex-end;
}
.tools button {
    margin: 0 7px 14px 0;
}
.tools button svg {
    width: 18px;
    height: 19px;
}
.tools hr {
    width: 31px;
    border: none;
    border-top: 2px solid #bbb;
}
.gizmo {
    width: 84px;
    height: 92px;
    margin: 0 13px 22px 0;
}
.gizmo text {
    font-size: 11px;
    font-weight: bold;
    text-anchor: middle;
    fill: white;
}
.help {
    position: absolute;
    right: 9px;
    bottom: 10px;
    width: 30px;
    height: 30px;
    border: 2px solid #888;
    border-radius: 50%;
    background-color: #2a2a2a;
    color: #ffd84a;
    font-size: 16px;
    font-weight: bold;
}

/* results */
.results {
    height: 119px;
    flex: none;
    overflow: hidden;
    background-color: #2a2a2a;
}
.results-title {
    height: 22px;
    padding: 0 4px 0 6px;
    background-color: #1b1b1b;
    display: flex;
    align-items: center;
    justify-content: space-between;
}
.results-title svg {
    width: 12px;
    height: 12px;
}
.results ul {
    list-style: none;
}
.results li {
    position: relative;
    height: 29px;
    padding: 0 10px 0 59px;
    border-bottom: 1px solid #1c1c1c;
    display: flex;
    align-items: center;
    font-size: 11px;
}
.results .cjk {
    font-size: 12px;
}
.results .sep {
    height: 16px;
    background-color: #4a4a4a;
    margin: 0 2px;
}
.kind {
    width: 12px;
    height: 13px;
    margin-right: 1px;
}
.eye {
    width: 12px;
    height: 9px;
    margin-left: auto;
}
.ok {
    position: absolute;
    left: 14px;
    width: 31px;
    line-height: 18px;
    border-radius: 2px;
    background-color: #4cc494;
    text-align: center;
}
.value {
    margin-left: auto;
    margin-right: 49px;
    color: #3cc8a0;
}
.pinned {
    width: 11px;
    height: 14px;
    margin-right: 37px;
}
```
